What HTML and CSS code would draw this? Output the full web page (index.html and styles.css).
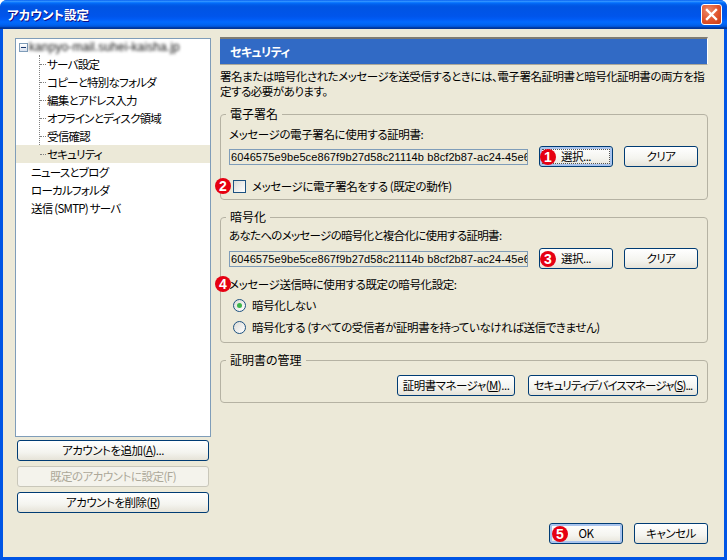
FILE: index.html
```html
<!DOCTYPE html>
<html lang="ja">
<head>
<meta charset="utf-8">
<title>アカウント設定</title>
<link rel="stylesheet" href="styles.css">
</head>
<body>
<div class="window">
  <header class="titlebar">
    <span class="title">アカウント設定</span>
    <span class="close">
      <svg width="21" height="21" viewBox="0 0 21 21"><path d="M6 6 L15 15 M15 6 L6 15" stroke="#fff" stroke-width="2.4" stroke-linecap="square"/></svg>
    </span>
  </header>
  <div class="content">
    <aside class="sidebar">
      <div class="tree">
        <div class="row root"><span class="expander"></span><span class="blurred">kanpyo-mail.suhei-kaisha.jp</span></div>
        <div class="children">
          <div class="row child">サーバ設定</div>
          <div class="row child">コピーと特別なフォルダ</div>
          <div class="row child">編集とアドレス入力</div>
          <div class="row child">オフラインとディスク領域</div>
          <div class="row child">受信確認</div>
          <div class="row child selected">セキュリティ</div>
        </div>
        <div class="row top">ニュースとブログ</div>
        <div class="row top">ローカルフォルダ</div>
        <div class="row top">送信 (SMTP) サーバ</div>
      </div>
      <div class="side-buttons">
        <button class="btn">アカウントを追加(<u>A</u>)...</button>
        <button class="btn disabled">既定のアカウントに設定(F)</button>
        <button class="btn">アカウントを削除(<u>R</u>)</button>
      </div>
    </aside>
    <main class="panel">
      <h1 class="heading">セキュリティ</h1>
      <p class="intro">署名または暗号化されたメッセージを送受信するときには、電子署名証明書と暗号化証明書の両方を指定する必要があります。</p>

      <fieldset class="group first">
        <legend>電子署名</legend>
        <div class="label">メッセージの電子署名に使用する証明書:</div>
        <div class="cert-row">
          <div class="cert">6046575e9be5ce867f9b27d58c21114b b8cf2b87-ac24-45e6</div>
          <button class="btn action focused"><span class="badge b-btn">1</span>選択...</button>
          <button class="btn action">クリア</button>
        </div>
        <div class="check-row">
          <span class="badge b-side">2</span>
          <span class="checkbox"></span>
          <span>メッセージに電子署名をする (既定の動作)</span>
        </div>
      </fieldset>

      <fieldset class="group second">
        <legend>暗号化</legend>
        <div class="label tight">あなたへのメッセージの暗号化と複合化に使用する証明書:</div>
        <div class="cert-row">
          <div class="cert">6046575e9be5ce867f9b27d58c21114b b8cf2b87-ac24-45e6</div>
          <button class="btn action"><span class="badge b-btn">3</span>選択...</button>
          <button class="btn action">クリア</button>
        </div>
        <div class="label policy"><span class="badge b-side">4</span>メッセージ送信時に使用する既定の暗号化設定:</div>
        <div class="radio-row"><span class="radio on"></span><span>暗号化しない</span></div>
        <div class="radio-row"><span class="radio"></span><span>暗号化する (すべての受信者が証明書を持っていなければ送信できません)</span></div>
      </fieldset>

      <fieldset class="group third">
        <legend>証明書の管理</legend>
        <div class="manager-row">
          <button class="btn mgr1">証明書マネージャ(<u>M</u>)...</button>
          <button class="btn mgr2">セキュリティデバイスマネージャ(<u>S</u>)...</button>
        </div>
      </fieldset>

      <div class="footer">
        <button class="btn action default"><span class="badge b-ok">5</span>OK</button>
        <button class="btn action">キャンセル</button>
      </div>
    </main>
  </div>
</div>
</body>
</html>
```

FILE: styles.css
```css
* { box-sizing: border-box; }
html, body { margin: 0; padding: 0; background: #fff; }
body {
  width: 727px;
  height: 560px;
  overflow: hidden;
  font-family: "Noto Sans CJK JP", "Liberation Sans", sans-serif;
  font-size: 11.5px;
  letter-spacing: -0.4px;
  font-feature-settings: "palt";
  color: #000;
}
.window {
  width: 727px;
  height: 560px;
  display: flex;
  flex-direction: column;
  border-radius: 7px 7px 0 0;
  overflow: hidden;
  background: #0055e5;
}
.titlebar {
  height: 29px;
  flex: none;
  display: flex;
  align-items: center;
  justify-content: space-between;
  padding: 0 5px 0 7px;
  background: linear-gradient(#0058ee 0, #3593ff 4%, #288eff 6%, #127dff 8%, #036ffc 10%, #0262ee 14%, #0057e5 20%, #0054e3 24%, #0055eb 56%, #005bf5 66%, #026afe 76%, #0062ef 86%, #0052d6 92%, #0040ab 94%, #003092 100%);
}
.title {
  color: #fff;
  font-size: 12.5px;
  font-weight: 700;
  letter-spacing: 0;
  text-shadow: 1px 1px 0 #0f1089;
}
.close {
  width: 21px;
  height: 21px;
  display: block;
  border: 1px solid #fff;
  border-radius: 3px;
  background: radial-gradient(circle at 35% 30%, #ec8a6a, #e0532c 55%, #c93c14);
}
.close svg { display: block; margin: -1px; }
.content {
  flex: 1;
  display: flex;
  gap: 9px;
  margin: 0 3px 3px;
  padding: 8px 16px 13px 12px;
  background: #ece9d8;
  min-height: 0;
}
.sidebar {
  width: 196px;
  flex: none;
  display: flex;
  flex-direction: column;
  margin-top: 1px;
  padding-bottom: 31px;
}
.tree {
  flex: 1;
  background: #fff;
  border: 1px solid #7f9db9;
  letter-spacing: -0.75px;
}
.row {
  height: 18px;
  line-height: 19px;
  white-space: nowrap;
}
.root {
  display: flex;
  align-items: center;
  height: 16px;
}
.expander {
  width: 9px;
  height: 9px;
  margin-left: 3px;
  border: 1px solid #7f9db9;
  background: linear-gradient(#fff, #d8e0ee);
  position: relative;
}
.expander::after {
  content: "";
  position: absolute;
  left: 1px;
  top: 3px;
  width: 5px;
  height: 1px;
  background: #1c3a6e;
}
.blurred {
  margin-left: 1px;
  filter: blur(1.4px);
  color: #111;
  font-size: 12px;
  font-family: "Liberation Sans", sans-serif;
  letter-spacing: 0.1px;
}
.children {
  margin-left: 23px;
  border-left: 1px dotted #808080;
}
.child {
  position: relative;
  padding-left: 7px;
}
.child::before {
  content: "";
  position: absolute;
  left: 0;
  top: 9px;
  width: 6px;
  border-top: 1px dotted #808080;
}
.selected { margin-left: -24px; padding-left: 31px; background: #ece9d8; }
.selected::before { left: 24px; }
.top { padding-left: 15px; }
.side-buttons {
  display: flex;
  flex-direction: column;
  gap: 5px;
  margin: 3px 2px 0;
}
.btn {
  height: 21px;
  padding: 0 4px;
  font: inherit;
  font-feature-settings: "palt";
  line-height: 17px;
  color: #000;
  border: 1px solid #003c74;
  border-radius: 3px;
  background: linear-gradient(#fff, #f4f4ef 60%, #e6e3d8);
  white-space: nowrap;
  position: relative;
  letter-spacing: -0.5px;
}
.btn.disabled {
  color: #aca899;
  border-color: #c9c7ba;
  background: #f4f3ec;
}
.panel {
  flex: 1;
  min-width: 0;
  display: flex;
  flex-direction: column;
}
.heading {
  margin: 0;
  height: 28px;
  padding-left: 10px;
  font-size: 12px;
  font-weight: 700;
  letter-spacing: -0.6px;
  line-height: 25px;
  color: #fff;
  background: #316ac5;
  border-top: 2px solid #7f7c73;
  border-right: 1px solid #fff;
  border-bottom: 1px solid #aca899;
}
.intro {
  margin: 4px 0 0;
  height: 37px;
  line-height: 15px;
  letter-spacing: -0.47px;
}
.group {
  margin: 0;
  padding: 0 9px 4px 8px;
  min-width: 0;
  border: 1px solid #b5b2a3;
  border-radius: 4px;
}
.group legend {
  margin-left: -3px;
  padding: 0 4px;
  height: 16px;
  line-height: 16px;
  font-size: 12px;
  letter-spacing: 0;
}
.label {
  margin-top: 5px;
  height: 15px;
  line-height: 15px;
  white-space: nowrap;
}
.label.tight { margin-top: 3px; letter-spacing: -0.7px; }
.label.policy { margin-top: 8px; position: relative; }
.cert-row {
  display: flex;
  align-items: center;
  gap: 11px;
  margin-top: 4px;
}
.label.tight + .cert-row { margin-top: 5px; }
.cert {
  width: 299px;
  flex: none;
  height: 16px;
  padding: 0 1px;
  overflow: hidden;
  white-space: nowrap;
  background: #ece9d8;
  border: 1px solid #7f9db9;
  font-family: "Liberation Sans", sans-serif;
  font-size: 11px;
  line-height: 15px;
  letter-spacing: 0.1px;
}
.action { width: 74px; flex: none; }
.focused {
  box-shadow: inset 0 0 0 2px #a9c4ee;
  outline: 1px dotted #555;
  outline-offset: -4px;
}
.default { box-shadow: inset 0 0 0 2px #a9c4ee; }
.check-row {
  position: relative;
  display: flex;
  align-items: center;
  height: 18px;
  margin-top: 10px;
  padding-left: 4px;
  gap: 6px;
}
.checkbox {
  width: 13px;
  height: 13px;
  border: 1px solid #1c5180;
  background: linear-gradient(135deg, #dcdcd7, #fff);
}
.radio-row {
  display: flex;
  align-items: center;
  height: 22px;
  padding-left: 4px;
  gap: 6px;
}
.policy + .radio-row { margin-top: 2px; }
.radio {
  width: 13px;
  height: 13px;
  border: 1px solid #1c5180;
  border-radius: 50%;
  background: linear-gradient(135deg, #dcdcd7, #fff);
  position: relative;
}
.radio.on::after {
  content: "";
  position: absolute;
  left: 3px;
  top: 3px;
  width: 5px;
  height: 5px;
  border-radius: 50%;
  background: #3bb54a;
}
.second { margin-top: 9px; }
.third { margin-top: 9px; padding-bottom: 6px; }
.manager-row {
  display: flex;
  justify-content: flex-end;
  gap: 13px;
  margin-top: 7px;
}
.mgr1 { width: 118px; }
.mgr2 { width: 170px; letter-spacing: -0.9px; }
.footer {
  margin-top: auto;
  display: flex;
  justify-content: flex-end;
  gap: 11px;
}
.badge {
  position: absolute;
  width: 16px;
  height: 16px;
  border-radius: 50%;
  background: #e60012;
  color: #fff;
  font-family: "Liberation Sans", sans-serif;
  font-size: 14px;
  font-weight: 700;
  line-height: 16px;
  letter-spacing: 0;
  text-align: center;
}
.b-btn { left: 0; top: 2px; }
.b-side { left: -14px; top: 0; }
.b-ok { left: 2px; top: 2px; }
.check-row .b-side { top: 1px; left: -14px; }
.label.policy .b-side { top: -1px; left: -14px; }
```
